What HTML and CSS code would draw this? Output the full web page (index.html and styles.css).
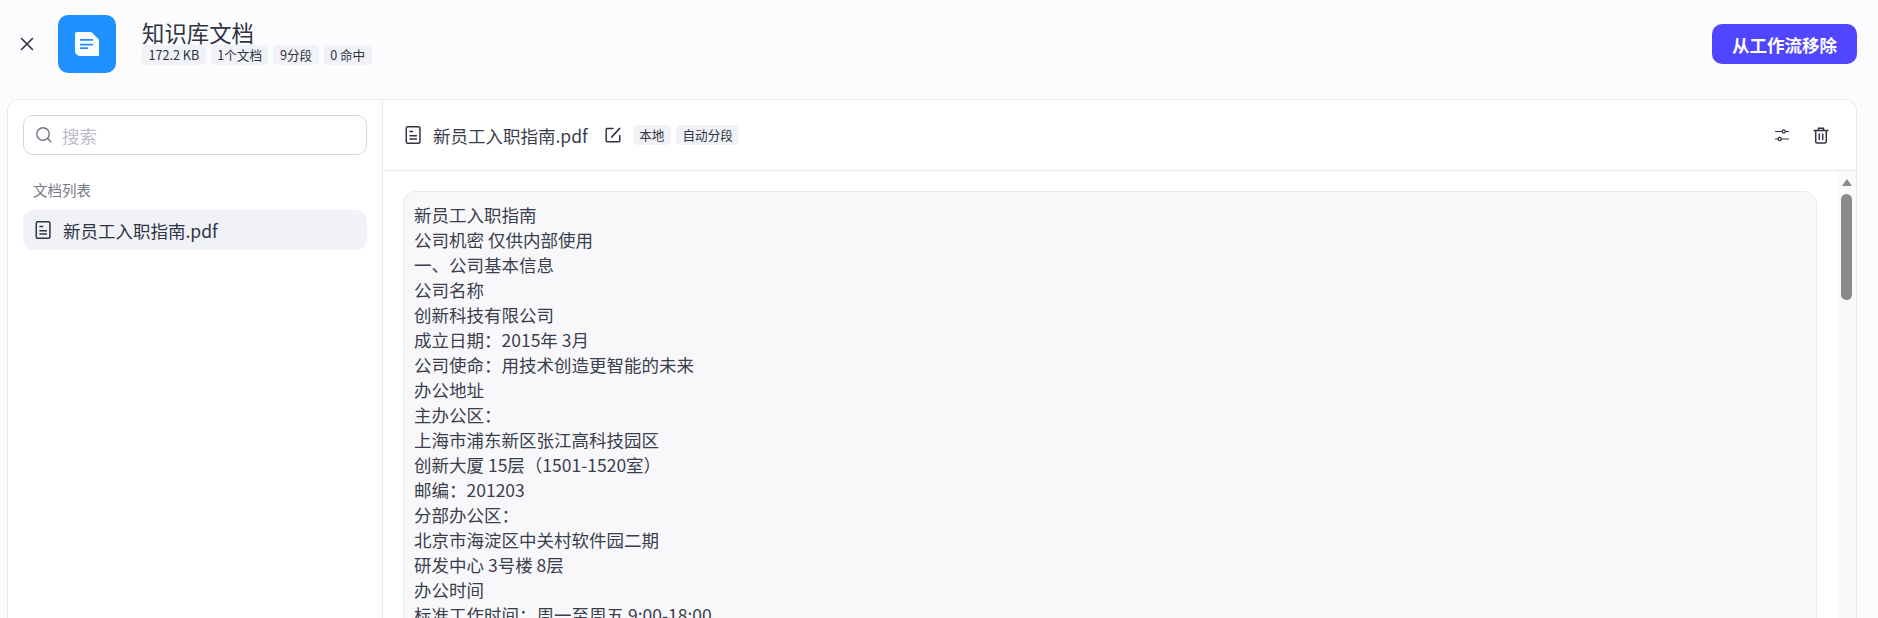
FILE: index.html
```html
<!DOCTYPE html>
<html lang="zh-CN">
<head>
<meta charset="utf-8">
<title>知识库文档</title>
<link rel="stylesheet" href="styles.css">
</head>
<body>
<div class="page">
  <header class="header">
    <button class="close" aria-label="关闭">
      <svg width="20" height="20" viewBox="0 0 20 20" fill="none" stroke="#2f3342" stroke-width="1.6" stroke-linecap="round"><path d="M4.5 4.5l11 11M15.5 4.5l-11 11"/></svg>
    </button>
    <div class="logo">
      <svg width="26" height="26" viewBox="0 0 26 26"><path d="M3 1h13.500a2 2 0 0 1 1.400.6L24.400 8a2 2 0 0 1 .6 1.400V24a1 1 0 0 1-1 1H6a5 5 0 0 1-5-5V3a2 2 0 0 1 2-2z" fill="#fff" opacity=".97"/><path d="M6 8.800h13M6 13.600h13M6 17.200h8" stroke="#1e90ff" stroke-width="1.700" fill="none"/></svg>
    </div>
    <div class="heading">
      <div class="title">知识库文档</div>
      <div class="tags">
        <span class="tag">172.2 KB</span>
        <span class="tag">1个文档</span>
        <span class="tag">9分段</span>
        <span class="tag">0 命中</span>
      </div>
    </div>
    <button class="primary">从工作流移除</button>
  </header>
  <main class="panel">
    <aside class="sidebar">
      <div class="search">
        <svg width="18" height="18" viewBox="0 0 18 18" fill="none" stroke="#6f7484" stroke-width="1.4" stroke-linecap="round"><circle cx="8" cy="8" r="6.200"/><path d="M12.600 12.600l3.200 3.200"/></svg>
        <span class="placeholder">搜索</span>
      </div>
      <div class="list-title">文档列表</div>
      <div class="doc-item">
        <svg class="doc-icon" width="18" height="18" viewBox="0 0 18 18" fill="none" stroke="#2f3342" stroke-width="1.500"><rect x="1.250" y=".75" width="13.700" height="16.500" rx="1.500"/><path d="M4.400 5.500h3.800M4.400 9.800h7.600M4.400 13h7.600"/></svg>
        <span>新员工入职指南.pdf</span>
      </div>
    </aside>
    <section class="detail">
      <div class="toolbar">
        <svg class="doc-icon" width="18" height="18" viewBox="0 0 18 18" fill="none" stroke="#2f3342" stroke-width="1.500"><rect x="1.250" y=".75" width="13.700" height="16.500" rx="1.500"/><path d="M4.400 5.500h3.800M4.400 9.800h7.600M4.400 13h7.600"/></svg>
        <span class="doc-name">新员工入职指南.pdf</span>
        <svg class="edit" width="16" height="16" viewBox="0 0 16 16" fill="none" stroke="#2f3342" stroke-width="1.500" stroke-linecap="round"><path d="M8 1.500H2.200a1 1 0 0 0-1 1v11.300a1 1 0 0 0 1 1h11.600a1 1 0 0 0 1-1V8.500"/><path d="M6.800 10L14.500 1.500" stroke-width="1.800"/></svg>
        <span class="tag tag-first">本地</span>
        <span class="tag">自动分段</span>
        <div class="actions">
          <svg width="16" height="16" viewBox="0 0 16 16" fill="none" stroke="#2f3342" stroke-width="1.200" stroke-linecap="round"><path d="M1.500 4.500h6.500M11.500 4.500h3M1.500 12h2.500M7.500 12h7"/><circle cx="9.700" cy="4.500" r="1.600"/><circle cx="5.700" cy="12" r="1.600"/></svg>
          <svg width="16" height="17" viewBox="0 0 16 17" fill="none" stroke="#2f3342" stroke-width="1.500" stroke-linecap="round"><path d="M1 3.500h14M5.500 3.500V1.300h5v2.200M2.700 3.500v11a1.500 1.500 0 0 0 1.500 1.500h7.600a1.500 1.500 0 0 0 1.500-1.500v-11M6.300 7v5.500M9.700 7v5.500"/></svg>
        </div>
      </div>
      <div class="viewer">
        <div class="content">
          <p>新员工入职指南</p>
          <p>公司机密 仅供内部使用</p>
          <p>一、公司基本信息</p>
          <p>公司名称</p>
          <p>创新科技有限公司</p>
          <p>成立日期：2015年 3月</p>
          <p>公司使命：用技术创造更智能的未来</p>
          <p>办公地址</p>
          <p>主办公区：</p>
          <p>上海市浦东新区张江高科技园区</p>
          <p>创新大厦 15层（1501-1520室）</p>
          <p>邮编：201203</p>
          <p>分部办公区：</p>
          <p>北京市海淀区中关村软件园二期</p>
          <p>研发中心 3号楼 8层</p>
          <p>办公时间</p>
          <p>标准工作时间：周一至周五 9:00-18:00</p>
        </div>
        <div class="scrollbar">
          <span class="arrow"></span>
          <span class="thumb"></span>
        </div>
      </div>
    </section>
  </main>
</div>
</body>
</html>
```

FILE: styles.css
```css
* { box-sizing: border-box; }
html, body { margin: 0; height: 100%; overflow: hidden; }
body {
  background: #fcfcff;
  color: #2f3342;
  font-family: "Noto Sans CJK SC", "Noto Sans", sans-serif;
}
p { margin: 0; }
button { font-family: inherit; border: 0; cursor: pointer; }
.page { display: flex; flex-direction: column; height: 618px; padding: 0 21px 0 7px; }
.header { display: flex; align-items: center; height: 99px; flex-shrink: 0; padding: 0 0 11px 10px; }
.close { display: flex; padding: 0; background: none; width: 20px; height: 20px; margin-right: 21px; }
.logo {
  width: 58px; height: 58px; border-radius: 10px; background: #1e90ff;
  display: flex; align-items: center; justify-content: center; margin-right: 26px;
}
.heading { display: flex; flex-direction: column; flex: 1; margin-bottom: 4px; }
.title { font-size: 22.400px; line-height: 26px; }
.tags { display: flex; gap: 5px; }
.tag {
  display: inline-flex; align-items: center; height: 20px; padding: 0 6.500px;
  background: #f1f2f8; border-radius: 5px; font-size: 12.600px; line-height: 20px; color: #2f3342;
}
.primary {
  width: 145px; height: 40px; border-radius: 10px; background: #5046ff; color: #fff;
  font-size: 17.500px; font-weight: 700;
}
.panel {
  flex: 1; display: flex; min-height: 0; background: #fff;
  border: 1px solid #e9e9f2; border-bottom: 0; border-radius: 12px 12px 0 0; overflow: hidden;
}
.sidebar { width: 375px; flex-shrink: 0; border-right: 1px solid #e9e9f2; padding: 15px 15px 0; }
.search {
  display: flex; align-items: center; gap: 9px; height: 40px; padding: 0 11px;
  border: 1px solid #d3d4de; border-radius: 10px;
}
.placeholder { font-size: 17.500px; color: #bbbdc8; }
.list-title { font-size: 14.500px; line-height: 20px; color: #767a88; margin: 25px 0 0 10px; }
.doc-item {
  display: flex; align-items: center; gap: 10px; height: 40px; margin-top: 10px; padding: 0 12px;
  background: #f1f2f8; border-radius: 10px; font-size: 17.500px;
}
.doc-icon { flex-shrink: 0; }
.detail { flex: 1; min-width: 0; display: flex; flex-direction: column; }
.toolbar {
  display: flex; align-items: center; height: 71px; flex-shrink: 0; padding: 0 27px 0 22px;
  border-bottom: 1px solid #e9e9f2; font-size: 17.500px;
}
.doc-name { margin-left: 10px; color: #3a3e4c; }
.edit { margin: 0 12px 0 17px; }
.tag-first { margin-right: 5px; }
.actions { margin-left: auto; display: flex; gap: 23px; align-items: center; }
.viewer { flex: 1; min-height: 0; display: flex; overflow: hidden; padding-left: 20px; }
.content {
  flex: 1; margin-top: 20px; margin-right: 20px; padding: 10px 10px; height: 600px;
  background: #f8f8fb; border: 1px solid #e9e9f2; border-radius: 12px;
  font-size: 17.500px; line-height: 25px; color: #3a3e4c;
}
.scrollbar { width: 19px; background: #fafafa; display: flex; flex-direction: column; align-items: center; padding-top: 8px; flex-shrink: 0; }
.arrow { width: 0; height: 0; border-left: 5px solid transparent; border-right: 5px solid transparent; border-bottom: 7px solid #8a8a8a; }
.thumb { width: 11px; height: 106px; margin-top: 8px; border-radius: 6px; background: #8a8a8a; }
```
